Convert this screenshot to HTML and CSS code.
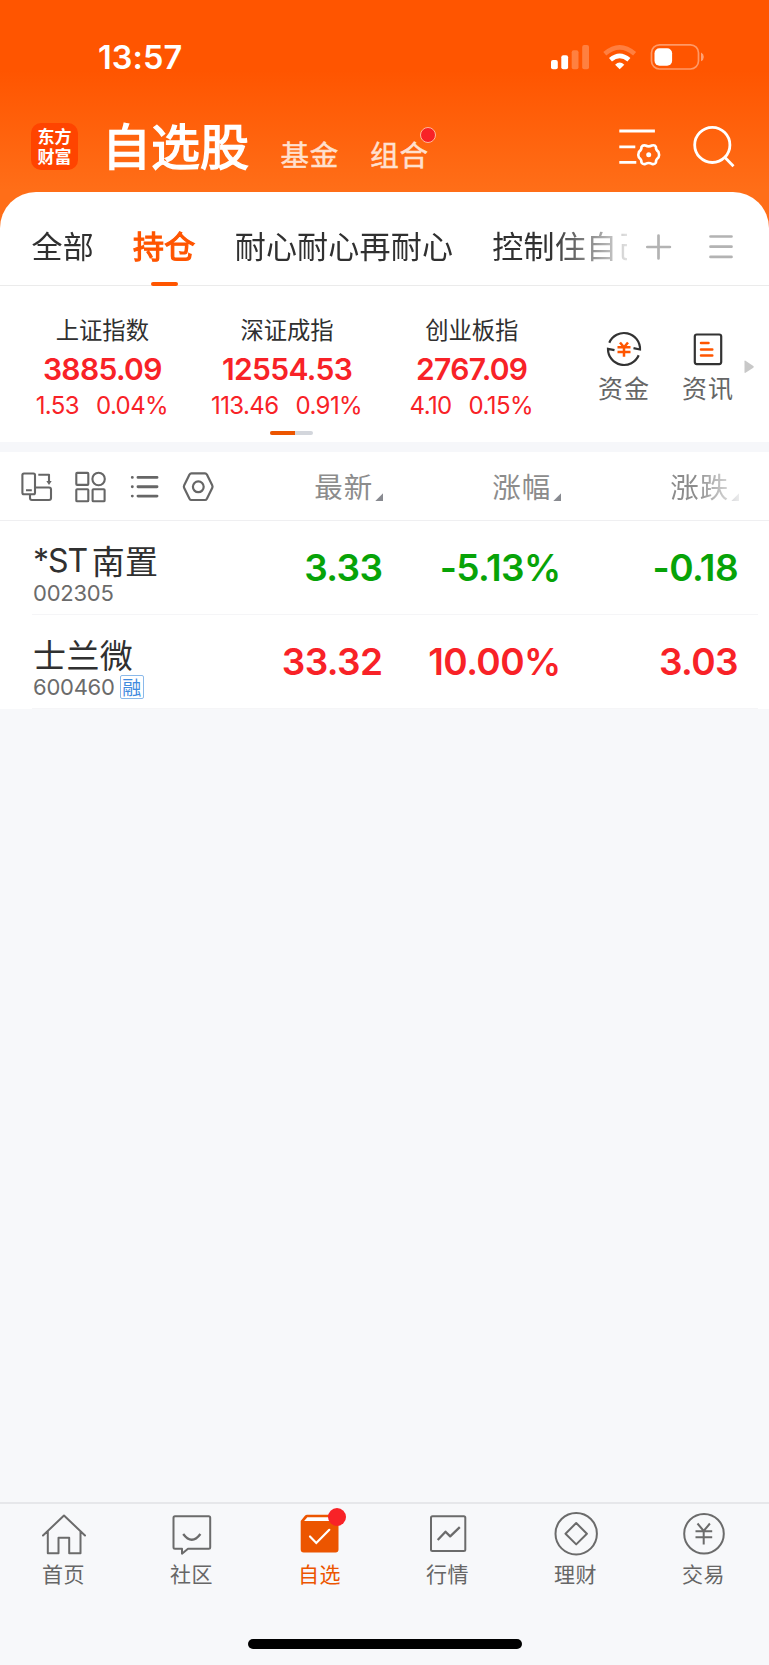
FILE: index.html
```html
<!DOCTYPE html>
<html lang="zh-CN">
<head>
<meta charset="utf-8">
<title>自选股</title>
<link rel="stylesheet" href="styles.css">
</head>
<body>
<div class="app">
  <div class="status">
    <span class="time">13:57</span>
    <svg class="status-icons" width="160" height="32" viewBox="548 41 160 32">
      <g fill="#fff">
        <rect x="551" y="60" width="6.8" height="9.3" rx="2"/>
        <rect x="561.3" y="55.3" width="6.8" height="14" rx="2"/>
        <g opacity=".25">
          <rect x="571.7" y="50.3" width="6.8" height="19" rx="2"/>
          <rect x="582.2" y="45" width="6.8" height="24.3" rx="2"/>
        </g>
        <path d="M619.7 69.3l-4.6-4.6q4.6-4.2 9.2 0z"/>
      </g>
      <path d="M610.5 59.8q9.2-7.8 18.4 0" fill="none" stroke="#fff" stroke-width="4.6"/>
      <path d="M604.8 53.8q14.9-12.8 29.8 0" fill="none" stroke="#fff" stroke-opacity=".25" stroke-width="4.6"/>
      <rect x="651.5" y="44.8" width="47" height="24.2" rx="8" fill="none" stroke="#fff" stroke-opacity=".4" stroke-width="1.7"/>
      <rect x="654.5" y="48.3" width="17.6" height="17.4" rx="5" fill="#fff"/>
      <path d="M701 52.5q2.8 1.5 2.8 4.4t-2.8 4.4z" fill="#fff" fill-opacity=".45"/>
    </svg>
  </div>

  <header class="brand">
    <div class="logo"><span>东方</span><span>财富</span></div>
    <h1 class="title">自选股</h1>
    <span class="sub fund">基金</span>
    <span class="sub combo">组合<i class="dot"></i></span>
    <svg class="brand-icons" width="120" height="44" viewBox="616 124 120 44" fill="none" stroke="#fff" stroke-width="2.8">
      <path d="M619.3 131h35.6M619.3 146.8h16M619.3 162.4h17"/>
      <path stroke-width="2.6" stroke-linejoin="round" d="M645.5 145.500q3.200 1.700 6.400 0 3-.8 4 1.300-.2 3.300 2.600 5.100 1.200 2.800 0 5.600-2.800 1.800-2.600 5.100-1.200 2-4 1.300-3.200-1.700-6.400 0-2.800.7-4-1.300.2-3.300-2.600-5.100-1.200-2.800 0-5.600 2.800-1.800 2.600-5.100 1.200-2 4-1.300z"/>
      <circle cx="648.700" cy="154.700" r="2.500" fill="#fff" stroke="none"/>
      <circle cx="712.3" cy="144.900" r="17.600"/>
      <path d="M724.500 157l9 9.200"/>
    </svg>
  </header>

  <main class="card">
    <nav class="tabs">
      <div class="tab-list">
        <span class="tab">全部</span>
        <span class="tab active">持仓</span>
        <span class="tab">耐心耐心再耐心</span>
        <span class="tab">控制住自己</span>
      </div>
      <svg class="tab-tools" width="80" height="30" viewBox="645 232 80 30" fill="none" stroke="#b3b3b3" stroke-width="2.700" stroke-linecap="round">
        <path d="M647.300 247h22.600M658.500 235.500v23M710.500 236.500h21M710.500 246.700h21M710.500 256.900h21"/>
      </svg>
    </nav>

    <section class="indices">
      <div class="quotes">
        <div class="quote"><span class="q-name">上证指数</span><b class="q-val">3885.09</b><span class="q-chg"><span>1.53</span><span>0.04%</span></span></div>
        <div class="quote"><span class="q-name">深证成指</span><b class="q-val">12554.53</b><span class="q-chg"><span>113.46</span><span>0.91%</span></span></div>
        <div class="quote"><span class="q-name">创业板指</span><b class="q-val">2767.09</b><span class="q-chg"><span>4.10</span><span>0.15%</span></span></div>
      </div>
      <div class="shortcut">
        <svg width="38" height="38" viewBox="-19 -19 38 38" fill="none" stroke="#333" stroke-width="2.200">
          <path d="M-14.700-6.300A16 16 0 0 1 16 .5L9.500-.8"/>
          <path d="M14.700 6.300A16 16 0 0 1-16-.1l6.500 1.200"/>
          <path stroke="#ff5500" stroke-width="2.500" d="M-4-6.500l4 4.800 4-4.800M-6.500-1.700h13M-6.500 2.900h13M0-1.700v9.500"/>
        </svg>
        <span>资金</span>
      </div>
      <div class="shortcut">
        <svg width="38" height="38" viewBox="-19 -19 38 38" fill="none" stroke="#333" stroke-width="2.200">
          <rect x="-13.200" y="-14.500" width="26.400" height="29.600" rx="2"/>
          <path stroke="#ff5500" stroke-width="2.500" stroke-linecap="round" d="M-7-5.900h7.500M-7 .5h11.300M-7 6.600h11.300"/>
        </svg>
        <span>资讯</span>
      </div>
      <svg class="more" width="11" height="14" viewBox="0 0 11 14"><path d="M.5 1.300Q.5.200 1.500.8l7.800 5.300q1 .8 0 1.600l-7.800 5.100q-1 .5-1-.6z" fill="#c8c8c8"/></svg>
      <div class="pager"><i></i></div>
    </section>

    <section class="toolbar">
      <svg class="tools" width="196" height="36" viewBox="20 469 196 36" fill="none" stroke="#666" stroke-width="2.100" stroke-linejoin="round">
        <rect x="22.400" y="473.500" width="12.600" height="20.700" rx="1.500"/>
        <path d="M35 487.500H49q2 0 2 2v8.500q0 2-2 2H32q-2 0-2-2V494.500M26 490.200h5.800M38.300 474.700h10.700V482"/>
        <path d="M46.300 481h5.400l-2.700 4z" fill="#666" stroke="none"/>
        <rect x="76.300" y="472.900" width="12" height="12" rx=".8"/><circle cx="98.600" cy="479" r="6.200"/>
        <rect x="76.300" y="489.200" width="12" height="12" rx=".8"/><rect x="92.600" y="489.200" width="12" height="12" rx=".8"/>
        <path stroke-width="2.900" stroke-linecap="round" d="M138 477.400h19M138 486.800h19M138 496.100h19M132.300 477.400h.01M132.300 486.800h.01M132.300 496.100h.01"/>
        <path stroke-width="2.200" d="M191.400 473.300h13.600q1.200 0 1.900 1.200l5.300 10.700q.7 1.400 0 2.800l-5.300 10.700q-.7 1.300-1.900 1.300h-13.600q-1.200 0-1.900-1.300l-5.300-10.700q-.7-1.400 0-2.800l5.300-10.700q.7-1.200 1.900-1.200z"/>
        <circle cx="198.300" cy="486.800" r="5.400" stroke-width="2.200"/>
      </svg>
      <span class="col c1">最新<i></i></span>
      <span class="col c2">涨幅<i></i></span>
      <span class="col c3">涨跌<i></i></span>
    </section>

    <section class="stock down">
      <div class="who">
        <div class="name"><span class="latin">*ST</span>南置</div>
        <div class="code">002305</div>
      </div>
      <span class="num n1">3.33</span><span class="num n2">-5.13%</span><span class="num n3">-0.18</span>
    </section>
    <section class="stock up">
      <div class="who">
        <div class="name">士兰微</div>
        <div class="code">600460<em>融</em></div>
      </div>
      <span class="num n1">33.32</span><span class="num n2">10.00%</span><span class="num n3">3.03</span>
    </section>
  </main>

  <footer class="bottom">
    <nav class="bar">
      <a class="item">
        <svg width="48" height="46" viewBox="40.500 1510 48 46" fill="none" stroke="#6b6b6b" stroke-width="2" stroke-linejoin="round" stroke-linecap="round">
          <path d="M43.500 1535.500L64.500 1515.500l21 20M48.300 1531.500v21.800H59v-15.500h10.700v15.500h11.300v-21.800"/>
        </svg><span>首页</span></a>
      <a class="item">
        <svg width="48" height="46" viewBox="168.500 1510 48 46" fill="none" stroke="#6b6b6b" stroke-width="2" stroke-linejoin="round">
          <path d="M175.500 1516.300h33.700q1.500 0 1.500 1.500v29.400q0 1.500-1.500 1.500h-20.700l-6 5v-5h-7q-1.500 0-1.500-1.500v-29.400q0-1.500 1.500-1.500z"/>
          <path d="M183.700 1534q8.600 11.500 17.200 0" stroke-width="2.300"/>
        </svg><span>社区</span></a>
      <a class="item on">
        <svg width="48" height="46" viewBox="296.500 1510 48 46">
          <path d="M301.200 1521l4-5q1-1.300 2.500-1.300H336q3 0 3 3v31.800q0 3-3 3h-31.800q-3 0-3-3z" fill="#ec5500"/>
          <path d="M307.800 1517.200H334v3.800h-29.400z" fill="#fff"/>
          <path d="M310.500 1536.500l6.300 6.500 13-13.200" fill="none" stroke="#fff" stroke-width="2.200" stroke-linecap="round"/>
        </svg><span>自选</span><i class="dot"></i></a>
      <a class="item">
        <svg width="48" height="46" viewBox="424 1510 48 46" fill="none" stroke="#6b6b6b" stroke-width="2">
          <rect x="431" y="1516.300" width="34.300" height="34.700" rx="1.500"/>
          <path d="M437.700 1540l7.800-8.300 4.700 4.700 9.600-9.200" stroke-width="2.300" stroke-linejoin="round"/>
        </svg><span>行情</span></a>
      <a class="item">
        <svg width="48" height="46" viewBox="552 1510 48 46" fill="none" stroke="#6b6b6b" stroke-width="2" stroke-linejoin="round">
          <circle cx="576.200" cy="1533.700" r="20.700"/><path d="M576.200 1523l10.700 10.700-10.700 10.700-10.700-10.700z"/>
        </svg><span>理财</span></a>
      <a class="item">
        <svg width="48" height="46" viewBox="680 1510 48 46" fill="none" stroke="#6b6b6b" stroke-width="2">
          <circle cx="704" cy="1533.700" r="19.800"/><path d="M697.500 1523.500l6.200 7.500 6.200-7.500M695.500 1531.300h16.700M695.500 1537.300h16.700M703.700 1531v13.500"/>
        </svg><span>交易</span></a>
    </nav>
    <div class="home-indicator"></div>
  </footer>
</div>
</body>
</html>
```
FILE: styles.css
```css
* { box-sizing: border-box; }
body { margin: 0; }
svg { display: block; flex: none; }
i, em { font-style: normal; }

.app {
  width: 769px;
  height: 1665px;
  display: flex;
  flex-direction: column;
  overflow: hidden;
  background: linear-gradient(#ff5500 0, #ff5500 70px, #ff6e18 190px) top / 100% 240px no-repeat, #f7f8fa;
  font-family: "Noto Sans CJK SC", sans-serif;
  color: #303030;
}

/* status bar */
.status {
  height: 107px;
  padding: 41px 61px 0 98px;
  display: flex;
  justify-content: space-between;
}
.time {
  font: 600 32.500px/33px Inter, sans-serif;
  letter-spacing: .1px;
  color: #fff;
}

/* brand header */
.brand {
  height: 85px;
  padding: 0 33px 0 31px;
  display: flex;
  align-items: flex-start;
  color: #fff;
}
.logo {
  width: 47px;
  height: 47px;
  margin-top: 16px;
  padding-top: 3px;
  border-radius: 10px;
  background: #ff4400;
  display: flex;
  flex-direction: column;
  align-items: center;
  font-size: 17px;
  font-weight: 700;
  line-height: 20px;
}
.title {
  margin: 12px 0 0 24px;
  font-size: 49px;
  font-weight: 400;
  line-height: 50px;
  -webkit-text-stroke: 1.500px #fff;
}
.sub {
  position: relative;
  margin-top: 32px;
  font-size: 28.500px;
  font-weight: 400;
  line-height: 30px;
  letter-spacing: .8px;
  color: #ffe0cf;
  -webkit-text-stroke: .500px #ffe0cf;
}
.fund { margin-left: 31.500px; }
.combo { margin-left: 31px; }
.combo .dot {
  position: absolute;
  right: -7.500px;
  top: -12px;
  width: 16px;
  height: 16px;
  border-radius: 50%;
  border: 1px solid #ffb79c;
  background: #f82227;
}
.brand-icons { margin: 17px 0 0 auto; }

/* card */
.card {
  border-radius: 36px 36px 0 0;
  background: #fff;
}
.tabs {
  height: 94px;
  border-bottom: 1px solid #ebebeb;
  display: flex;
}
.tab-list {
  width: 627px;
  height: 94px;
  padding: 36px 0 0 31.500px;
  display: flex;
  gap: 39.200px;
  overflow: hidden;
  -webkit-mask-image: linear-gradient(90deg, #000 550px, transparent 640px);
  mask-image: linear-gradient(90deg, #000 550px, transparent 640px);
}
.tab {
  flex: none;
  height: 58px;
  font-size: 31px;
  line-height: 34px;
  letter-spacing: .2px;
}
.tab.active {
  display: flex;
  flex-direction: column;
  justify-content: space-between;
  align-items: center;
  color: #ff5500;
  -webkit-text-stroke: 1.200px #ff5500;
}
.tab.active::after {
  content: "";
  width: 27px;
  height: 4px;
  border-radius: 2px;
  background: #ff5500;
}
.tab-tools { margin: 40px 0 0 18px; overflow: visible; }

.indices {
  height: 156px;
  display: grid;
  grid-template-columns: 582px 84px 84px 19px;
  grid-template-rows: 145px 4px;
}
.quotes {
  padding: 29px 0 0 10px;
  display: grid;
  grid-template-columns: repeat(3, 184.700px);
}
.quote {
  display: flex;
  flex-direction: column;
  align-items: center;
}
.q-name { font-size: 23.300px; line-height: 28px; }
.q-val {
  margin-top: 9.500px;
  font: 600 30px/32px Inter, sans-serif;
  letter-spacing: -.65px;
  color: #f82227;
}
.q-chg {
  margin-top: 7.500px;
  padding-right: 1px;
  display: flex;
  gap: 17px;
  font: 400 24px/28px Inter, sans-serif;
  letter-spacing: -.6px;
  color: #f82227;
}
.shortcut {
  padding-top: 44px;
  display: flex;
  flex-direction: column;
  align-items: center;
  font-size: 25px;
  line-height: 30px;
  letter-spacing: 1px;
  color: #666;
}
.shortcut span { margin-top: 4px; }
.more { margin: 74px 0 0 -6px; }
.pager {
  width: 43px;
  height: 4px;
  margin-left: 270px;
  border-radius: 2px;
  overflow: hidden;
  background: #d3d6dc;
}
.pager i { display: block; width: 25px; height: 4px; background: #ec5500; }

/* list toolbar */
.toolbar {
  height: 79px;
  border-top: 10px solid #f6f7fa;
  border-bottom: 1px solid #efeff1;
  padding: 17px 0 0 20px;
  display: flex;
}
.col {
  display: flex;
  padding-top: 1px;
  font-size: 28.500px;
  line-height: 32px;
  letter-spacing: 1px;
  color: #8c8c8c;
}
.col i {
  width: 8px;
  height: 8px;
  margin: 23px 0 0 2px;
  background: #888a90;
  clip-path: polygon(100% 0, 100% 100%, 0 100%);
}
.c1 { margin-left: 98.300px; }
.c2 { margin-left: 109px; }
.c3 {
  margin-left: 109px;
  -webkit-mask-image: linear-gradient(90deg, #000 25px, transparent 78px);
  mask-image: linear-gradient(90deg, #000 25px, transparent 78px);
}

/* stock rows */
.stock {
  height: 94px;
  padding: 22px 31px 0 33px;
  display: grid;
  grid-template-columns: 170px 179.500px 178px 177.500px;
  background: linear-gradient(#f5f5f7, #f5f5f7) 32px 100% / 726px 1.500px no-repeat;
}
.name {
  height: 34px;
  display: flex;
  font-size: 33px;
  line-height: 34px;
  letter-spacing: .4px;
}
.latin {
  margin-right: 4.500px;
  font: 400 32px/36px Inter, sans-serif;
  letter-spacing: -1px;
}
.code {
  margin-top: 5px;
  display: flex;
  font: 400 22px/22px Inter, sans-serif;
  letter-spacing: -.25px;
  color: #6b6b6b;
}
.code em {
  width: 24px;
  height: 24px;
  margin: -1px 0 0 5px;
  border: 1.500px solid #8ab9ea;
  border-radius: 2px;
  font: 400 19px/21px "Noto Sans CJK SC", sans-serif;
  letter-spacing: 0;
  text-align: center;
  color: #3f8ade;
}
.num {
  margin-top: 5px;
  text-align: right;
  font: 600 37px/40px Inter, sans-serif;
  letter-spacing: -.6px;
}
.down .num { color: #07a307; }
.up .num { color: #f82227; }

/* bottom bar */
.bottom {
  height: 163px;
  margin-top: auto;
  border-top: 2px solid #e6e7ea;
  background: #f7f8fa;
}
.bar {
  width: 768px;
  height: 135px;
  display: grid;
  grid-template-columns: repeat(6, 128px);
}
.item {
  position: relative;
  padding-top: 6px;
  display: flex;
  flex-direction: column;
  align-items: center;
  font-size: 21px;
  line-height: 26px;
  letter-spacing: .6px;
  color: #666;
}
.item span { margin: 4px 1px 0 0; }
.item.on { color: #ec5500; }
.item .dot {
  position: absolute;
  left: 71.500px;
  top: 4px;
  width: 18px;
  height: 18px;
  border-radius: 50%;
  background: #f82227;
}
.home-indicator {
  width: 274px;
  height: 10px;
  margin: 0 auto;
  border-radius: 5px;
  background: #000;
}
```
